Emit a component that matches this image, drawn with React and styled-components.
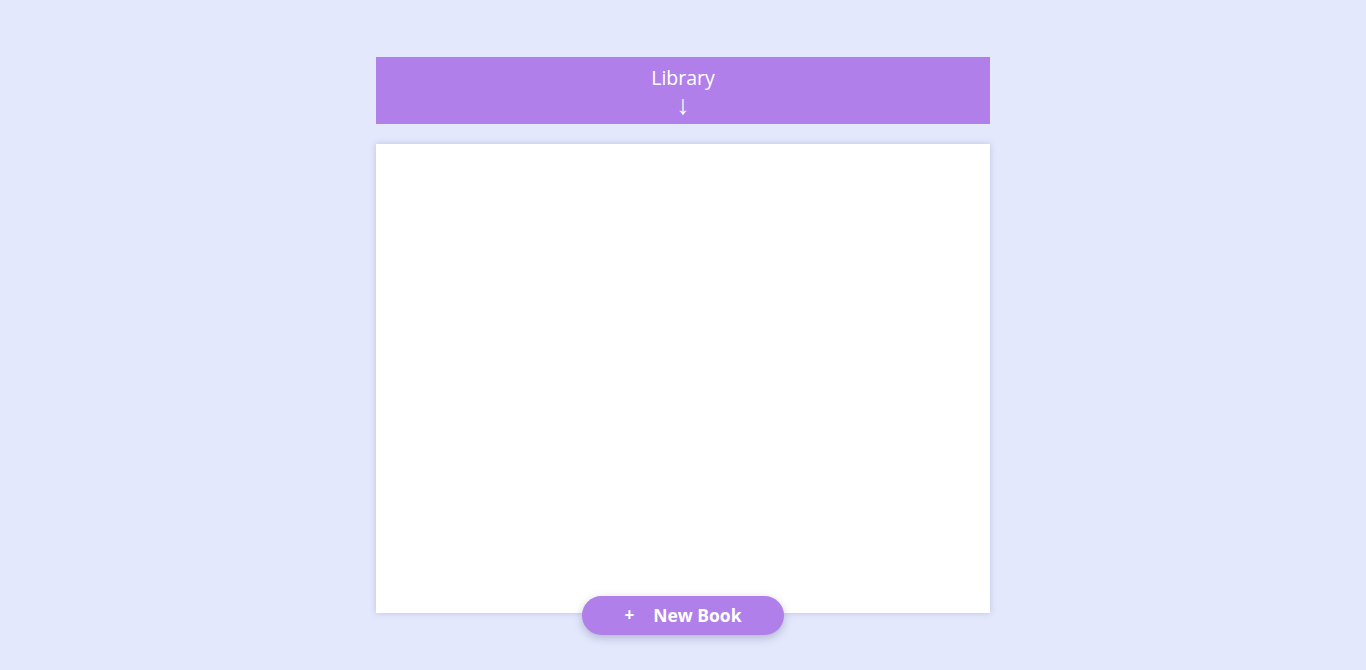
import styled, { createGlobalStyle } from 'styled-components';

const GlobalStyle = createGlobalStyle`
  html, body {
    margin: 0;
    padding: 0;
    background: #e3e8fd;
    font-family: "Open Sans", "Noto Sans", sans-serif;
  }
`;

export default function App() {
  return (
    <Page>
      <GlobalStyle />
      <Header>
        <Title>Library</Title>
        <Arrow>↓</Arrow>
      </Header>
      <Shelf />
      <AddButton>
        <Plus>+</Plus>
        New Book
      </AddButton>
    </Page>
  );
}

const Page = styled.div`
  display: flex;
  flex-direction: column;
  align-items: center;
  padding-top: 57px;
  min-height: 670px;
  box-sizing: border-box;
`;

const Header = styled.header`
  width: 614px;
  height: 67px;
  box-sizing: border-box;
  padding-top: 7px;
  background: #b07fea;
  color: #fff;
  display: flex;
  flex-direction: column;
  align-items: center;
`;

const Title = styled.div`
  font-size: 19.5px;
  line-height: 27px;
`;

const Arrow = styled.div`
  font-family: "Liberation Sans", sans-serif;
  font-size: 27px;
  line-height: 28px;
`;

const Shelf = styled.main`
  width: 614px;
  height: 469px;
  margin-top: 20px;
  background: #fff;
  box-shadow: 0 0 6px rgba(120, 120, 170, 0.35);
`;

const AddButton = styled.button`
  margin-top: -17px;
  width: 202px;
  height: 39px;
  padding: 0 0 2px;
  border: none;
  border-radius: 20px;
  background: #b07fea;
  color: #fff;
  font-family: inherit;
  font-size: 17.5px;
  font-weight: 700;
  display: flex;
  align-items: center;
  justify-content: center;
  box-shadow: 0 3px 8px rgba(90, 90, 130, 0.35);
  position: relative;
  cursor: pointer;
`;

const Plus = styled.span`
  font-size: 17px;
  margin-right: 19px;
`;
